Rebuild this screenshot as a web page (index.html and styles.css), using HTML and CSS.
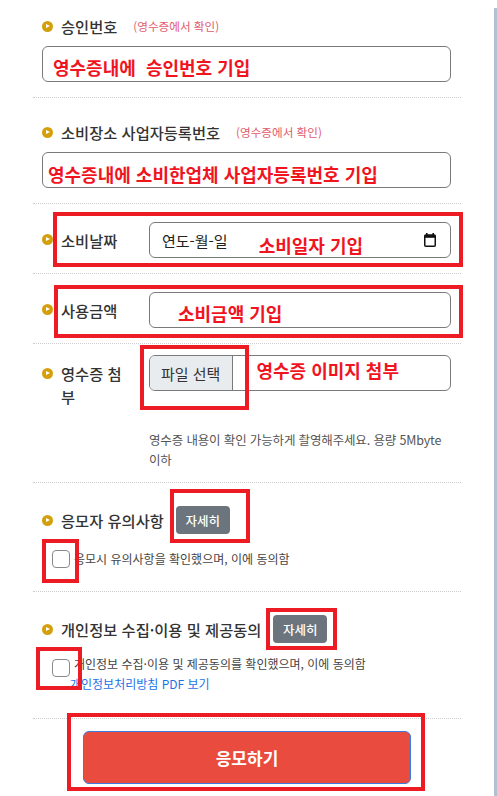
FILE: index.html
```html
<!DOCTYPE html>
<html lang="ko">

<head>
	<meta charset="UTF-8">
	<meta name="viewport" content="width=device-width, initial-scale=1.0">
	<title>응모하기</title>
	<link rel="stylesheet" href="styles.css">
</head>

<body>
	<div class="screen">
		<main class="page">
			<section class="field stack first">
				<div class="label"><i class="dot"></i><span>승인번호</span><small class="hint">(영수증에서 확인)</small></div>
				<div class="box"><span class="note n1">영수증내에&nbsp; 승인번호 기입</span></div>
			</section>

			<section class="field stack">
				<div class="label"><i class="dot"></i><span>소비장소 사업자등록번호</span><small class="hint">(영수증에서 확인)</small></div>
				<div class="box"><span class="note n2">영수증내에 소비한업체 사업자등록번호 기입</span></div>
			</section>

			<section class="field row">
				<div class="label"><i class="dot"></i><span>소비날짜</span></div>
				<div class="box date">
					<span class="ph">연도-월-일</span>
					<span class="note n3">소비일자 기입</span>
					<svg class="cal" width="12" height="14" viewBox="0 0 12 14">
						<rect x="2" y="0" width="1.6" height="3" fill="#111" />
						<rect x="8.4" y="0" width="1.6" height="3" fill="#111" />
						<rect x="0.75" y="2" width="10.5" height="11.25" rx="1" fill="none" stroke="#111" stroke-width="1.5" />
						<rect x="0.75" y="2" width="10.5" height="2.8" fill="#111" />
					</svg>
				</div>
			</section>

			<section class="field row">
				<div class="label"><i class="dot"></i><span>사용금액</span></div>
				<div class="box"><span class="note n4">소비금액 기입</span></div>
			</section>

			<section class="field row file-row">
				<div class="label"><i class="dot"></i><span>영수증 첨부</span></div>
				<div>
					<div class="box file">
						<span class="pick">파일 선택</span>
						<span class="note n5">영수증 이미지 첨부</span>
					</div>
					<p class="help">영수증 내용이 확인 가능하게 촬영해주세요. 용량 5Mbyte 이하</p>
				</div>
			</section>

			<section class="field agree">
				<div class="title">
					<div class="label"><i class="dot"></i><span>응모자 유의사항</span></div>
					<button class="more">자세히</button>
				</div>
				<div class="check">
					<span class="tick"></span>
					<span>응모시 유의사항을 확인했으며, 이에 동의함</span>
				</div>
			</section>

			<section class="field agree">
				<div class="title">
					<div class="label"><i class="dot"></i><span>개인정보 수집·이용 및 제공동의</span></div>
					<button class="more">자세히</button>
				</div>
				<div class="check two">
					<span class="tick"></span>
					<div>
						<span>개인정보 수집·이용 및 제공동의를 확인했으며, 이에 동의함</span>
						<a class="pdf" href="#">개인정보처리방침 PDF 보기</a>
					</div>
				</div>
			</section>

			<section class="submit">
				<button class="go">응모하기</button>
			</section>

			<!-- markup boxes drawn over the form -->
			<i class="mark" style="left:53px;top:212px;width:410px;height:55px"></i>
			<i class="mark" style="left:54px;top:285px;width:409px;height:53px"></i>
			<i class="mark" style="left:140px;top:345px;width:109px;height:65px"></i>
			<i class="mark" style="left:170px;top:489px;width:80px;height:54px"></i>
			<i class="mark" style="left:42px;top:539px;width:37px;height:44px"></i>
			<i class="mark" style="left:266px;top:608px;width:71px;height:42px"></i>
			<i class="mark" style="left:36px;top:647px;width:46px;height:43px"></i>
			<i class="mark" style="left:67px;top:713px;width:358px;height:78px"></i>
		</main>
		<div class="rail"></div>
	</div>
</body>

</html>
```

FILE: styles.css
```css
* {
	margin: 0;
	padding: 0;
	box-sizing: border-box;
}

body {
	font-family: "Noto Sans CJK KR", "Noto Sans", sans-serif;
	color: #333;
	background: #fff;
}

.screen {
	display: flex;
	width: 497px;
	height: 796px;
	overflow: hidden;
}

.page {
	position: relative;
	flex: 1;
	padding: 0 33px;
}

.rail {
	width: 3px;
	margin-top: 8px;
	background: #b3c0d4;
}

.field {
	padding: 0 10px 0 9px;
	border-bottom: 1px dotted #cdcdcd;
}

.label {
	display: flex;
	align-items: center;
	font-size: 15.3px;
	line-height: 22px;
	font-weight: 500;
	color: #333;
	white-space: nowrap;
}

.dot {
	position: relative;
	flex: none;
	width: 11px;
	height: 11px;
	margin-right: 8px;
	border-radius: 50%;
	background: #d3a00c;
}

.dot::after {
	content: "";
	position: absolute;
	left: 4px;
	top: 3px;
	border-left: 4px solid #fff;
	border-top: 2.5px solid transparent;
	border-bottom: 2.5px solid transparent;
}

.hint {
	margin-left: 16px;
	font-size: 11.6px;
	font-weight: 400;
	color: #e25b6e;
}

.box {
	display: flex;
	align-items: center;
	height: 36px;
	border: 1px solid #7a7a7a;
	border-radius: 6px;
	overflow: hidden;
}

.stack {
	padding-top: 23px;
	padding-bottom: 15px;
}

.stack.first {
	padding-top: 15px;
}

.stack .box {
	margin-top: 9px;
}

.note {
	font-size: 18px;
	font-weight: 700;
	color: #f0141e;
	white-space: nowrap;
}

.n1 {
	padding: 6px 0 0 10px;
}

.n2 {
	padding: 7px 0 0 5px;
}

.row {
	display: grid;
	grid-template-columns: 107px 1fr;
	align-items: start;
	padding-top: 18px;
	padding-bottom: 15px;
}

.row .label {
	align-items: flex-start;
	padding: 7px 16px 0 0;
	line-height: 23px;
	white-space: normal;
}

.row .dot {
	margin-top: 5px;
}

.date .ph {
	padding-left: 12px;
	font-size: 15px;
	color: #222;
}

.n3 {
	margin-left: 31px;
	padding-top: 10px;
}

.cal {
	margin: 0 14px 0 auto;
}

.n4 {
	padding: 6px 0 0 28px;
}

.file-row {
	padding-top: 11px;
	padding-bottom: 12px;
}

.file-row .dot {
	margin-top: 6px;
}

.pick {
	display: flex;
	align-items: center;
	height: 100%;
	padding: 0 12px 0 11px;
	border-right: 1px solid #7a7a7a;
	background: #e9ecef;
	font-size: 15px;
	color: #333;
	white-space: nowrap;
}

.n5 {
	margin-left: 23px;
	padding-bottom: 6px;
}

.help {
	margin-top: 39px;
	font-size: 12.5px;
	line-height: 20px;
	letter-spacing: -0.15px;
	color: #555;
}

.agree {
	padding-top: 23px;
	padding-bottom: 23px;
}

.agree+.agree {
	padding-bottom: 24px;
}

.title {
	display: flex;
	align-items: center;
	gap: 12px;
}

.more {
	width: 54px;
	height: 28px;
	border: 0;
	border-radius: 4px;
	background: #6c757d;
	color: #fff;
	font-family: inherit;
	font-size: 12.5px;
	font-weight: 500;
}

.check {
	display: flex;
	align-items: center;
	gap: 4px;
	margin-top: 16px;
	padding-left: 10px;
	font-size: 12px;
	line-height: 18px;
	color: #444;
}

.tick {
	flex: none;
	width: 18px;
	height: 18px;
	border: 1px solid #8a8a8a;
	border-radius: 4px;
	background: #fff;
}

.check.two {
	align-items: flex-start;
	margin-top: 11px;
	line-height: 20px;
}

.check.two .tick {
	margin-top: 5px;
}

.pdf {
	display: block;
	margin-left: -4px;
	color: #1a73e8;
	text-decoration: none;
}

.submit {
	padding-top: 12px;
}

.go {
	display: block;
	width: 328px;
	height: 53px;
	margin: 0 auto;
	border: 1px solid #3b7be0;
	border-radius: 6px;
	background: #e94b3f;
	color: #fff;
	font-family: inherit;
	font-size: 17px;
	font-weight: 700;
}

.mark {
	position: absolute;
	border: 4px solid #ed1c24;
}
```
